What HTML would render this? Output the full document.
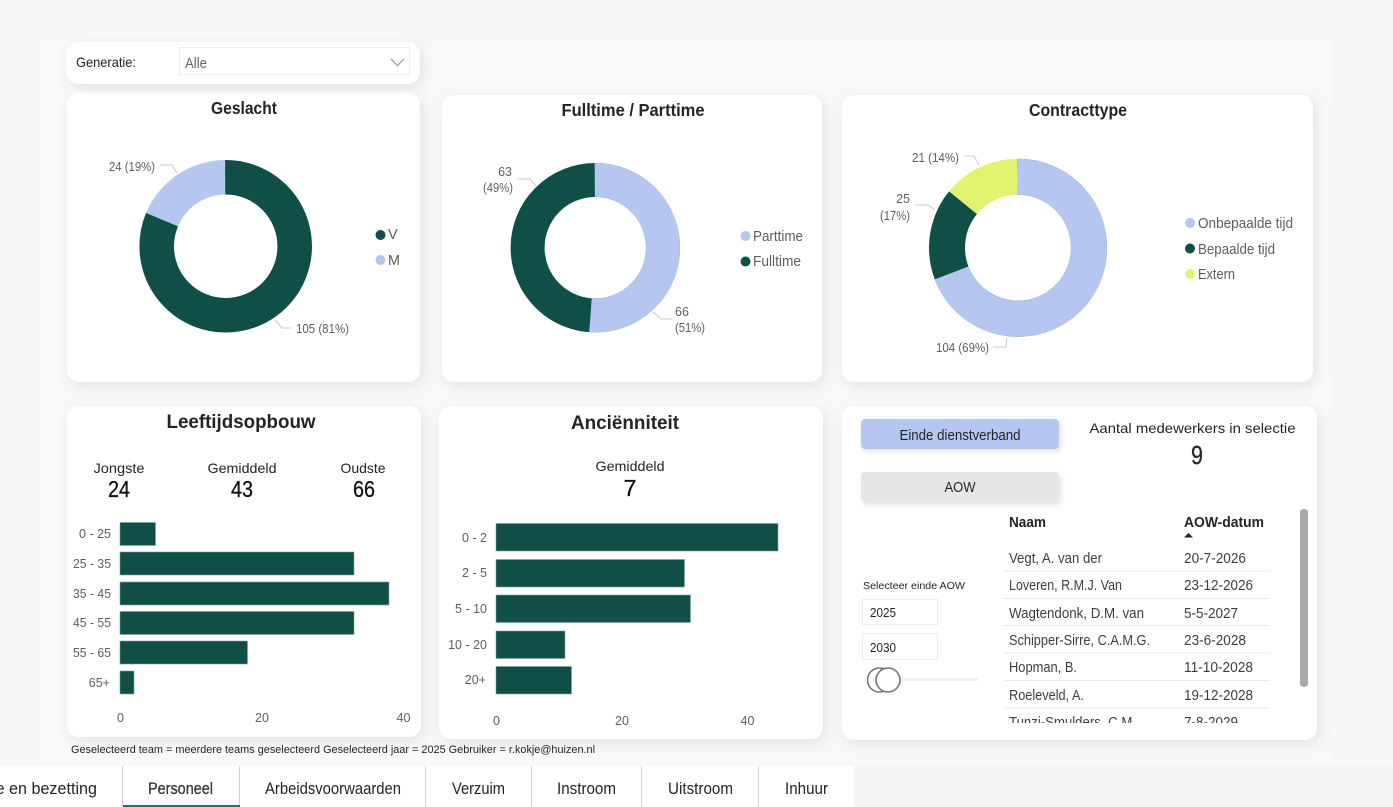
<!DOCTYPE html>
<html><head><meta charset="utf-8"><title>Personeel</title>
<style>
html,body{margin:0;padding:0;background:#f8f8f8;width:1393px;height:807px;overflow:hidden}
svg{display:block;position:absolute;left:0;top:0}
text{font-family:"Liberation Sans",sans-serif;white-space:pre}
.card{fill:#fff;filter:url(#sh)}
.g{fill:#605e5c;font-size:12.5px}
.l{fill:#605e5c;font-size:14.5px}
.d{fill:#3f3e3d;font-size:14.5px}
.h{fill:#252423;font-size:14.5px;font-weight:bold}
.tb{fill:#252423;font-size:16.5px}
.k{fill:#252423;font-size:14px}
.v{fill:#111;font-size:23px;stroke:#111;stroke-width:.3}
.ln{fill:none;stroke:#c8c8c8;stroke-width:1}
.bar{fill:#0f4f48;stroke:#7fa5a1;stroke-width:.6}
.sep{stroke:#e8e8e8;stroke-width:1}
.ts{stroke:#cfcfcf;stroke-width:1}
</style></head><body>
<svg width="1393" height="807" viewBox="0 0 1393 807" xmlns="http://www.w3.org/2000/svg">
<defs>
<filter id="sh" x="-10%" y="-10%" width="125%" height="125%"><feDropShadow dx="3" dy="4" stdDeviation="7" flood-color="#000" flood-opacity=".09"/></filter>
<filter id="bs" x="-10%" y="-30%" width="125%" height="180%"><feDropShadow dx="2" dy="3" stdDeviation="3" flood-color="#000" flood-opacity=".11"/></filter>
<clipPath id="tc"><rect x="1000" y="540" width="280" height="183"/></clipPath>
</defs>
<rect width="1393" height="807" fill="#f8f8f8"/>
<rect x="40" y="38" width="1290" height="725" fill="#f9f9f9"/>

<!-- Cards -->
<rect class="card" x="66" y="42" width="354" height="42" rx="13"/>
<rect class="card" x="67" y="93" width="353" height="289" rx="12"/>
<rect class="card" x="442" y="95" width="380" height="287" rx="12"/>
<rect class="card" x="842" y="95" width="471" height="287" rx="12"/>
<rect class="card" x="67" y="406" width="354" height="331" rx="12"/>
<rect class="card" x="439" y="406" width="384" height="333" rx="12"/>
<rect class="card" x="842" y="406" width="475" height="334" rx="12"/>

<!-- Slicer -->
<text x="76" y="67" font-size="14" fill="#252423" textLength="60" lengthAdjust="spacingAndGlyphs">Generatie:</text>
<rect x="179.500" y="47.500" width="230" height="27" fill="#fff" stroke="#eeeeee"/>
<text x="185" y="68" font-size="14.500" fill="#666" textLength="22" lengthAdjust="spacingAndGlyphs">Alle</text>
<path d="M391 59l6.500 6.500L404 59" fill="none" stroke="#8a8a8a" stroke-width="1"/>

<!-- Titles -->
<text x="244" y="114" text-anchor="middle" font-size="17.500" font-weight="bold" fill="#252423" textLength="66" lengthAdjust="spacingAndGlyphs">Geslacht</text>
<text x="633" y="116" text-anchor="middle" font-size="17.500" font-weight="bold" fill="#252423" textLength="143" lengthAdjust="spacingAndGlyphs">Fulltime / Parttime</text>
<text x="1078" y="116" text-anchor="middle" font-size="17.500" font-weight="bold" fill="#252423" textLength="98" lengthAdjust="spacingAndGlyphs">Contracttype</text>
<text x="241" y="428" text-anchor="middle" font-size="19.500" font-weight="bold" fill="#252423" textLength="149" lengthAdjust="spacingAndGlyphs">Leeftijdsopbouw</text>
<text x="625" y="429" text-anchor="middle" font-size="19.500" font-weight="bold" fill="#252423" textLength="108" lengthAdjust="spacingAndGlyphs">Anciënniteit</text>

<!-- Donut Geslacht -->
<g transform="rotate(-90 225.700 246.300)" fill="none" stroke-width="34.500">
<circle cx="225.700" cy="246.300" r="69" pathLength="100" stroke="#b5c7f0" stroke-dasharray="100 0"/>
<circle cx="225.700" cy="246.300" r="69" pathLength="100" stroke="#0f4f48" stroke-dasharray="81.400 18.600"/>
</g>
<path class="ln" d="M160 165h12l5 8M275 320l7 8h9"/>
<text class="g" x="109" y="171" textLength="46" lengthAdjust="spacingAndGlyphs">24 (19%)</text>
<text class="g" x="296" y="333" textLength="53" lengthAdjust="spacingAndGlyphs">105 (81%)</text>
<circle cx="380.500" cy="235" r="5" fill="#0f4f48"/><text class="l" x="388" y="239">V</text>
<circle cx="380.500" cy="260" r="5" fill="#b5c7f0"/><text class="l" x="388" y="265" textLength="12" lengthAdjust="spacingAndGlyphs">M</text>

<!-- Donut Fulltime -->
<g transform="rotate(-90 595.300 247.700)" fill="none" stroke-width="34">
<circle cx="595.300" cy="247.700" r="67.700" pathLength="100" stroke="#0f4f48" stroke-dasharray="100 0"/>
<circle cx="595.300" cy="247.700" r="67.700" pathLength="100" stroke="#b5c7f0" stroke-dasharray="51.200 48.800"/>
</g>
<path class="ln" d="M517 179h13l6 7M653 312l8 7h11"/>
<text class="g" x="512" y="176" text-anchor="end">63</text>
<text class="g" x="483" y="192" textLength="30" lengthAdjust="spacingAndGlyphs">(49%)</text>
<text class="g" x="675" y="316">66</text>
<text class="g" x="675" y="332" textLength="30" lengthAdjust="spacingAndGlyphs">(51%)</text>
<circle cx="745.500" cy="236" r="5" fill="#b5c7f0"/><text class="l" x="753" y="241" textLength="50" lengthAdjust="spacingAndGlyphs">Parttime</text>
<circle cx="745.500" cy="261.500" r="5" fill="#0f4f48"/><text class="l" x="753" y="266" textLength="48" lengthAdjust="spacingAndGlyphs">Fulltime</text>

<!-- Donut Contract -->
<g transform="rotate(-90 1018 247.700)" fill="none" stroke-width="36">
<circle cx="1018" cy="247.700" r="71" pathLength="100" stroke="#e2f36f" stroke-dasharray="100 0"/>
<circle cx="1018" cy="247.700" r="71" pathLength="100" stroke="#0f4f48" stroke-dasharray="86 14"/>
<circle cx="1018" cy="247.700" r="71" pathLength="100" stroke="#b5c7f0" stroke-dasharray="69.300 30.700"/>
</g>
<path class="ln" d="M964 156h10l5 9M915 205h13l7 5M993 347h13l1-9"/>
<text class="g" x="912" y="162" textLength="47" lengthAdjust="spacingAndGlyphs">21 (14%)</text>
<text class="g" x="910" y="203" text-anchor="end">25</text>
<text class="g" x="880" y="220" textLength="30" lengthAdjust="spacingAndGlyphs">(17%)</text>
<text class="g" x="936" y="352" textLength="53" lengthAdjust="spacingAndGlyphs">104 (69%)</text>
<circle cx="1190" cy="223" r="5" fill="#b5c7f0"/><text class="l" x="1198" y="228" textLength="95" lengthAdjust="spacingAndGlyphs">Onbepaalde tijd</text>
<circle cx="1190" cy="248.500" r="5" fill="#0f4f48"/><text class="l" x="1198" y="254" textLength="77" lengthAdjust="spacingAndGlyphs">Bepaalde tijd</text>
<circle cx="1190" cy="274" r="5" fill="#e2f36f"/><text class="l" x="1198" y="279" textLength="37" lengthAdjust="spacingAndGlyphs">Extern</text>

<!-- KPIs left -->
<text class="k" x="119" y="473" text-anchor="middle" textLength="51" lengthAdjust="spacingAndGlyphs">Jongste</text>
<text class="k" x="242" y="473" text-anchor="middle" textLength="69" lengthAdjust="spacingAndGlyphs">Gemiddeld</text>
<text class="k" x="363" y="473" text-anchor="middle" textLength="45" lengthAdjust="spacingAndGlyphs">Oudste</text>
<text class="v" x="119" y="497" text-anchor="middle" textLength="22" lengthAdjust="spacingAndGlyphs">24</text>
<text class="v" x="242" y="497" text-anchor="middle" textLength="22" lengthAdjust="spacingAndGlyphs">43</text>
<text class="v" x="364" y="497" text-anchor="middle" textLength="22" lengthAdjust="spacingAndGlyphs">66</text>

<!-- Bars left -->
<rect class="bar" x="120" y="522.500" width="35.500" height="23"/>
<rect class="bar" x="120" y="552" width="234" height="23"/>
<rect class="bar" x="120" y="582" width="269" height="23"/>
<rect class="bar" x="120" y="611.500" width="234" height="23"/>
<rect class="bar" x="120" y="641" width="127.500" height="23"/>
<rect class="bar" x="120" y="671" width="14" height="23"/>
<g class="g" text-anchor="end">
<text x="111" y="538">0 - 25</text>
<text x="111" y="568" textLength="38" lengthAdjust="spacingAndGlyphs">25 - 35</text>
<text x="111" y="598" textLength="38" lengthAdjust="spacingAndGlyphs">35 - 45</text>
<text x="111" y="627" textLength="38" lengthAdjust="spacingAndGlyphs">45 - 55</text>
<text x="111" y="657" textLength="38" lengthAdjust="spacingAndGlyphs">55 - 65</text>
<text x="110" y="687">65+</text>
</g>
<g class="g" text-anchor="middle">
<text x="120.500" y="722">0</text><text x="262" y="722">20</text><text x="403.500" y="722">40</text>
</g>

<!-- KPI Anc -->
<text class="k" x="630" y="471" text-anchor="middle" textLength="69" lengthAdjust="spacingAndGlyphs">Gemiddeld</text>
<text class="v" x="630" y="496" text-anchor="middle">7</text>
<!-- Bars Anc -->
<rect class="bar" x="496" y="523.500" width="282" height="27.500"/>
<rect class="bar" x="496" y="559.500" width="188.500" height="27.500"/>
<rect class="bar" x="496" y="595" width="194.500" height="27.500"/>
<rect class="bar" x="496" y="631" width="69" height="27.500"/>
<rect class="bar" x="496" y="666.500" width="75.500" height="27.500"/>
<g class="g" text-anchor="end">
<text x="487" y="542">0 - 2</text>
<text x="487" y="577">2 - 5</text>
<text x="487" y="613">5 - 10</text>
<text x="487" y="649">10 - 20</text>
<text x="486" y="684">20+</text>
</g>
<g class="g" text-anchor="middle">
<text x="496.500" y="725">0</text><text x="622" y="725">20</text><text x="747.500" y="725">40</text>
</g>

<!-- Right card -->
<rect x="861" y="419" width="198" height="30" rx="4" fill="#b5c7f0" filter="url(#bs)"/>
<text x="960" y="440" text-anchor="middle" font-size="14.500" fill="#252423" textLength="121" lengthAdjust="spacingAndGlyphs">Einde dienstverband</text>
<rect x="861" y="472" width="198" height="30" rx="4" fill="#e6e6e6" filter="url(#bs)"/>
<text x="960" y="492" text-anchor="middle" font-size="14.500" fill="#252423" textLength="31" lengthAdjust="spacingAndGlyphs">AOW</text>
<text x="1192.500" y="433" text-anchor="middle" font-size="14" fill="#252423" textLength="206" lengthAdjust="spacingAndGlyphs">Aantal medewerkers in selectie</text>
<text x="1197" y="464" text-anchor="middle" font-size="26" fill="#252423" stroke="#252423" stroke-width=".3" textLength="12" lengthAdjust="spacingAndGlyphs">9</text>

<text x="863" y="589" font-size="10.500" fill="#252423" textLength="102" lengthAdjust="spacingAndGlyphs">Selecteer einde AOW</text>
<rect x="862.500" y="599.500" width="75" height="25" fill="#fff" stroke="#ececec"/>
<text x="870" y="617" font-size="12.500" fill="#252423" textLength="26" lengthAdjust="spacingAndGlyphs">2025</text>
<rect x="862.500" y="633.500" width="75" height="26" fill="#fff" stroke="#ececec"/>
<text x="870" y="652" font-size="12.500" fill="#252423" textLength="26" lengthAdjust="spacingAndGlyphs">2030</text>
<rect x="880" y="678" width="98" height="3" fill="#f0f0f0"/>
<circle cx="879.500" cy="680" r="12" fill="#fff" stroke="#6f6f6f" stroke-width="1.500"/>
<circle cx="888" cy="680" r="12" fill="#fff" stroke="#6f6f6f" stroke-width="1.500"/>

<text class="h" x="1009" y="527" textLength="37" lengthAdjust="spacingAndGlyphs">Naam</text>
<text class="h" x="1184" y="527" textLength="80" lengthAdjust="spacingAndGlyphs">AOW-datum</text>
<path d="M1184 537.500l4.500-4.500 4.500 4.500z" fill="#252423"/>
<g clip-path="url(#tc)" class="d">
<text x="1009" y="563" textLength="93" lengthAdjust="spacingAndGlyphs">Vegt, A. van der</text><text x="1184" y="563" textLength="62" lengthAdjust="spacingAndGlyphs">20-7-2026</text>
<text x="1009" y="590" textLength="113" lengthAdjust="spacingAndGlyphs">Loveren, R.M.J. Van</text><text x="1184" y="590" textLength="69" lengthAdjust="spacingAndGlyphs">23-12-2026</text>
<text x="1009" y="618" textLength="135" lengthAdjust="spacingAndGlyphs">Wagtendonk, D.M. van</text><text x="1184" y="618" textLength="54" lengthAdjust="spacingAndGlyphs">5-5-2027</text>
<text x="1009" y="645" textLength="141" lengthAdjust="spacingAndGlyphs">Schipper-Sirre, C.A.M.G.</text><text x="1184" y="645" textLength="62" lengthAdjust="spacingAndGlyphs">23-6-2028</text>
<text x="1009" y="672" textLength="68" lengthAdjust="spacingAndGlyphs">Hopman, B.</text><text x="1184" y="672" textLength="69" lengthAdjust="spacingAndGlyphs">11-10-2028</text>
<text x="1009" y="700" textLength="75" lengthAdjust="spacingAndGlyphs">Roeleveld, A.</text><text x="1184" y="700" textLength="69" lengthAdjust="spacingAndGlyphs">19-12-2028</text>
<text x="1009" y="727" textLength="127" lengthAdjust="spacingAndGlyphs">Tunzi-Smulders, C.M.</text><text x="1184" y="727" textLength="54" lengthAdjust="spacingAndGlyphs">7-8-2029</text>
</g>
<g class="sep">
<path d="M1004 571h266M1004 598.500h266M1004 625.500h266M1004 653h266M1004 680.500h266M1004 708h266"/>
</g>
<rect x="1300" y="509" width="8" height="178" rx="3.500" fill="#aaa"/>

<!-- Footer note -->
<text x="71" y="753" font-size="11" fill="#252423" textLength="524" lengthAdjust="spacingAndGlyphs">Geselecteerd team = meerdere teams geselecteerd Geselecteerd jaar = 2025 Gebruiker = r.kokje@huizen.nl</text>

<!-- Tabs -->
<rect x="0" y="766" width="854" height="41" fill="#fff"/>
<rect x="854" y="766" width="539" height="41" fill="#f5f5f5"/>
<g class="ts">
<path d="M122.500 766v41M239.500 766v41M425.500 766v41M531.500 766v41M641.500 766v41M758.500 766v41"/>
</g>
<rect x="123" y="805" width="117" height="2" fill="#0e7a63"/>
<g class="tb">
<text x="-8" y="794" textLength="105" lengthAdjust="spacingAndGlyphs">ie en bezetting</text>
<text x="148" y="794" textLength="65" lengthAdjust="spacingAndGlyphs" fill="#3a3a3a" style="stroke:#3a3a3a;stroke-width:.35">Personeel</text>
<text x="265" y="794" textLength="136" lengthAdjust="spacingAndGlyphs">Arbeidsvoorwaarden</text>
<text x="452" y="794" textLength="53" lengthAdjust="spacingAndGlyphs">Verzuim</text>
<text x="557" y="794" textLength="59" lengthAdjust="spacingAndGlyphs">Instroom</text>
<text x="668" y="794" textLength="65" lengthAdjust="spacingAndGlyphs">Uitstroom</text>
<text x="785" y="794" textLength="43" lengthAdjust="spacingAndGlyphs">Inhuur</text>
</g>
</svg>
</body></html>
